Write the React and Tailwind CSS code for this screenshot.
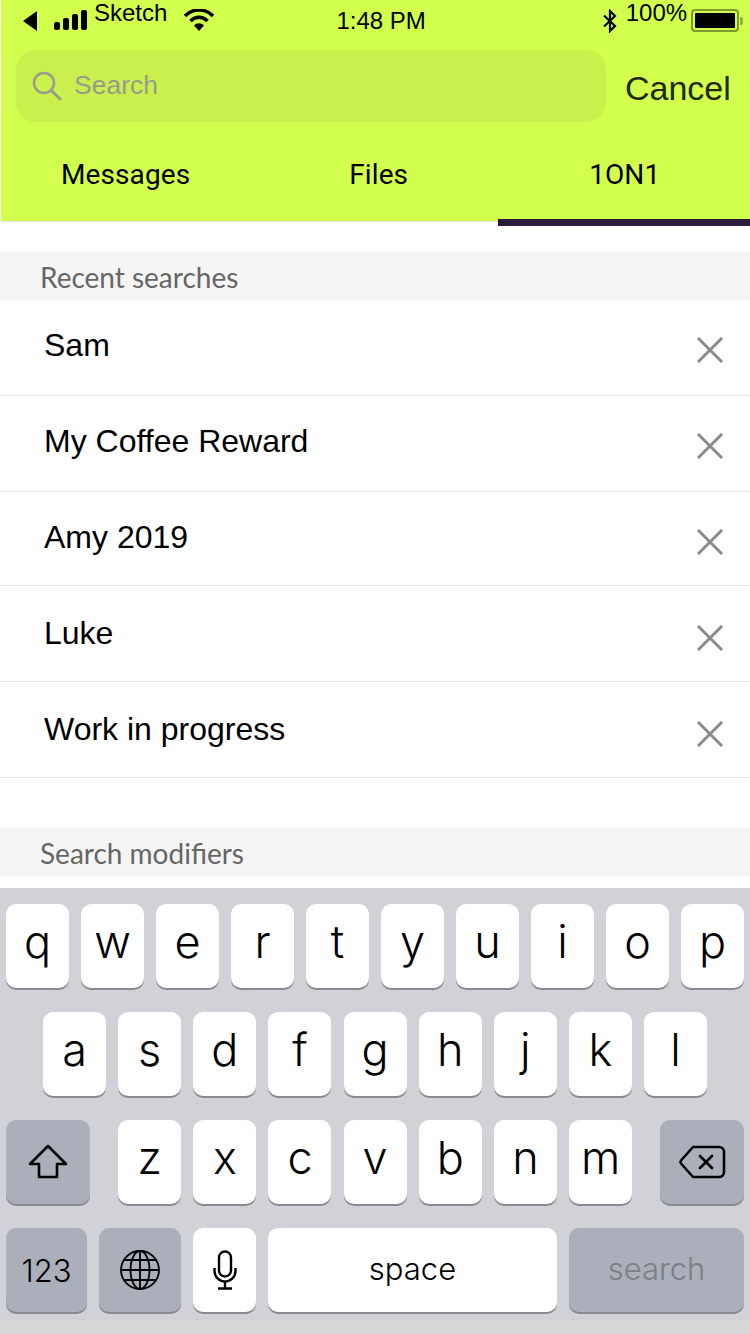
import React from "react";

const sans = "font-['Liberation_Sans',Arial,sans-serif]";
const inter = "font-['Inter',sans-serif]";
const roboto = "font-['Roboto',sans-serif]";
const lato = "font-['Lato',sans-serif]";

function Key({ children, className = "w-[63px]", dark = false }) {
  return (
    <div
      className={`h-[84px] shrink-0 rounded-[10px] flex items-center justify-center text-black ${inter} ${
        dark ? "bg-[#abafb9] shadow-[0_2px_0_#888a8f]" : "bg-white shadow-[0_2px_0_#898a8e]"
      } ${className}`}
    >
      {children}
    </div>
  );
}

function Letter({ c }) {
  return (
    <Key>
      <span className="text-[45px] leading-none font-light -mt-[10px]">{c}</span>
    </Key>
  );
}

function Row({ label, className = "h-[96px]" }) {
  return (
    <div className={`border-b border-[#e6e6e6] flex items-center justify-between pl-[44px] pr-[27px] shrink-0 ${className}`}>
      <span className={`text-[32px] leading-none text-black -mt-[5px] ${sans}`}>{label}</span>
      <svg width="26" height="26" viewBox="0 0 26 26" className="mt-[4px]">
        <path d="M2 2 L24 24 M24 2 L2 24" stroke="#8a8a8a" strokeWidth="3" strokeLinecap="square" fill="none" />
      </svg>
    </div>
  );
}

function SectionHead({ children }) {
  return (
    <div className={`h-[48px] shrink-0 bg-[#f5f5f5] pl-[40px] pt-[1px] flex items-center text-[28px] text-[#666] leading-none ${lato}`}>
      {children}
    </div>
  );
}

export default function App() {
  const recents = [
    ["Sam", "h-[96px]"],
    ["My Coffee Reward", "h-[96px]"],
    ["Amy 2019", "h-[94px] pt-[2px]"],
    ["Luke", "h-[96px] pt-[4px]"],
    ["Work in progress", "h-[96px] pt-[4px]"],
  ];
  return (
    <div className="w-[750px] h-[1334px] bg-white overflow-hidden flex flex-col">
      <div className="relative h-[222px] shrink-0 bg-white border-b border-[#e6e6e6]">
        <div className="ml-[1px] h-[221px] bg-[#d2ff4d] flex flex-col">
          {/* status bar */}
          <div className={`h-[50px] relative flex items-start text-black whitespace-nowrap ${sans}`}>
            <svg width="14" height="20" viewBox="0 0 14 20" className="ml-[22px] mt-[11px] shrink-0">
              <path d="M14 0 V20 L0 10 Z" fill="#000" />
            </svg>
            <svg width="34" height="20" viewBox="0 0 34 20" className="ml-[17px] mt-[10px] shrink-0">
              <rect x="0" y="12" width="6" height="8" rx="2" fill="#000" />
              <rect x="9" y="8" width="6" height="12" rx="2" fill="#000" />
              <rect x="18" y="4" width="6" height="16" rx="2" fill="#000" />
              <rect x="27" y="0" width="6" height="20" rx="2" fill="#000" />
            </svg>
            <span className="ml-[6px] text-[24px] leading-none mt-[1px]">Sketch</span>
            <svg width="30" height="22" viewBox="0 0 30 22" className="ml-[17px] mt-[9px] shrink-0">
              <path d="M1 7 C9 -1 21 -1 29 7" stroke="#000" strokeWidth="3.6" fill="none" />
              <path d="M6.5 12 C11.5 7 18.500 7 23.500 12" stroke="#000" strokeWidth="3.6" fill="none" />
              <path d="M10 16.500 C13 13.500 17 13.500 20 16.500 L15 22 Z" fill="#000" />
            </svg>
            <span className="ml-[122px] text-[24px] leading-none mt-[9px]">1:48 PM</span>
            <svg width="16" height="24" viewBox="0 0 16 24" className="ml-[176px] mt-[9px] shrink-0">
              <path d="M2 6.500 L13 17 L8 22 V2 L13 7 L2 17.500" stroke="#000" strokeWidth="2.2" fill="none" />
            </svg>
            <span className="ml-[8px] text-[24px] leading-none mt-[1px]">100%</span>
            <div className="ml-[4px] mt-[9px] w-[48px] h-[23px] shrink-0 rounded-[4px] border-[2px] border-[#7f9b30] p-[2px]">
              <div className="w-full h-full bg-black rounded-[1px]" />
            </div>
            <div className="w-[3px] h-[8px] mt-[17px] ml-[1px] shrink-0 bg-[#93b03a] rounded-r-[2px]" />
          </div>
          {/* search row */}
          <div className="flex items-center h-[72px] pl-[15px]">
            <div className="w-[590px] h-[72px] rounded-[20px] bg-[#c9f04d] flex items-center pl-[16px]">
              <svg width="30" height="30" viewBox="0 0 30 30" className="shrink-0">
                <circle cx="12" cy="12" r="10" stroke="#9a9a8e" strokeWidth="2.5" fill="none" />
                <path d="M19.500 19.500 L28 28" stroke="#9a9a8e" strokeWidth="3" strokeLinecap="round" />
              </svg>
              <span className={`ml-[12px] text-[26.5px] leading-none text-[#9a9a8e] -mt-[1px] ${sans}`}>Search</span>
            </div>
            <span className={`ml-[19px] text-[34px] leading-none text-[#1f2a0a] mt-[4px] ${sans}`}>Cancel</span>
          </div>
          {/* tabs */}
          <div className={`flex-1 flex items-center text-[28px] leading-none tracking-[0.1px] text-black ${roboto}`}>
            <span className="ml-[60px] mt-[6px]">Messages</span>
            <span className="ml-[159px] mt-[6px]">Files</span>
            <span className="ml-[181px] mt-[6px]">1ON1</span>
          </div>
        </div>
        <div className="absolute left-[498px] right-0 top-[219px] h-[7px] bg-[#2c1a3a]" />
      </div>

      {/* content */}
      <div className="h-[30px] shrink-0" />
      <SectionHead>Recent searches</SectionHead>
      {recents.map(([r, c]) => (
        <Row key={r} label={r} className={c} />
      ))}
      <div className="h-[50px] shrink-0" />
      <SectionHead>Search modifiers</SectionHead>
      <div className="h-[12px] shrink-0" />

      {/* keyboard */}
      <div className="flex-1 bg-[#d0d2d8] flex flex-col">
        <div className="h-[432px] shrink-0 px-[6px] pt-[16px] flex flex-col gap-[24px]">
          <div className="flex gap-[12px]">
            {"qwertyuiop".split("").map((c) => (
              <Letter key={c} c={c} />
            ))}
          </div>
          <div className="flex gap-[12.15px] pl-[37px]">
            {"asdfghjkl".split("").map((c) => (
              <Letter key={c} c={c} />
            ))}
          </div>
          <div className="flex">
            <Key dark className="w-[84px]">
              <svg width="40" height="36" viewBox="0 0 40 36">
                <path d="M20 2 L38 20 H29 V33 H11 V20 H2 Z" stroke="#000" strokeWidth="2.6" strokeLinejoin="round" fill="none" />
              </svg>
            </Key>
            <div className="flex gap-[12.15px] ml-[28.2px]">
              {"zxcvbnm".split("").map((c) => (
                <Letter key={c} c={c} />
              ))}
            </div>
            <Key dark className="w-[84px] ml-auto">
              <svg width="48" height="36" viewBox="0 0 48 36">
                <path
                  d="M15 3 H41 A5 5 0 0 1 46 8 V28 A5 5 0 0 1 41 33 H15 L3 19.500 A2.500 2.500 0 0 1 3 16.500 Z"
                  stroke="#000"
                  strokeWidth="2.6"
                  strokeLinejoin="round"
                  fill="none"
                />
                <path d="M22 12 L34 24 M34 12 L22 24" stroke="#000" strokeWidth="2.6" strokeLinecap="round" />
              </svg>
            </Key>
          </div>
          <div className="flex gap-[12px]">
            <Key dark className="w-[81px]">
              <span className="text-[31px] leading-none font-light">123</span>
            </Key>
            <Key dark className="w-[82px]">
              <svg width="40" height="40" viewBox="0 0 40 40" fill="none" stroke="#000" strokeWidth="1.8">
                <circle cx="20" cy="20" r="19" />
                <ellipse cx="20" cy="20" rx="9.500" ry="19" />
                <path d="M20 1 V39 M1 20 H39 M4 10 H36 M4 30 H36" />
              </svg>
            </Key>
            <Key className="w-[63px]">
              <svg width="24" height="40" viewBox="0 0 24 40" fill="none" stroke="#000" strokeWidth="2.4">
                <rect x="6" y="1.500" width="12" height="25" rx="6" />
                <path d="M1.500 18 V21 A10.500 10.500 0 0 0 22.500 21 V18 M12 31.500 V38 M5 38.500 H19" />
              </svg>
            </Key>
            <Key className="w-[289px]">
              <span className="text-[31px] leading-none font-light -mt-[4px]">space</span>
            </Key>
            <Key dark className="w-[175px]">
              <span className="text-[31px] leading-none font-light text-[#7c7e86] -mt-[4px]">search</span>
            </Key>
          </div>
        </div>
        <div className="flex-1 bg-[#d8d8d8]" />
      </div>
    </div>
  );
}
